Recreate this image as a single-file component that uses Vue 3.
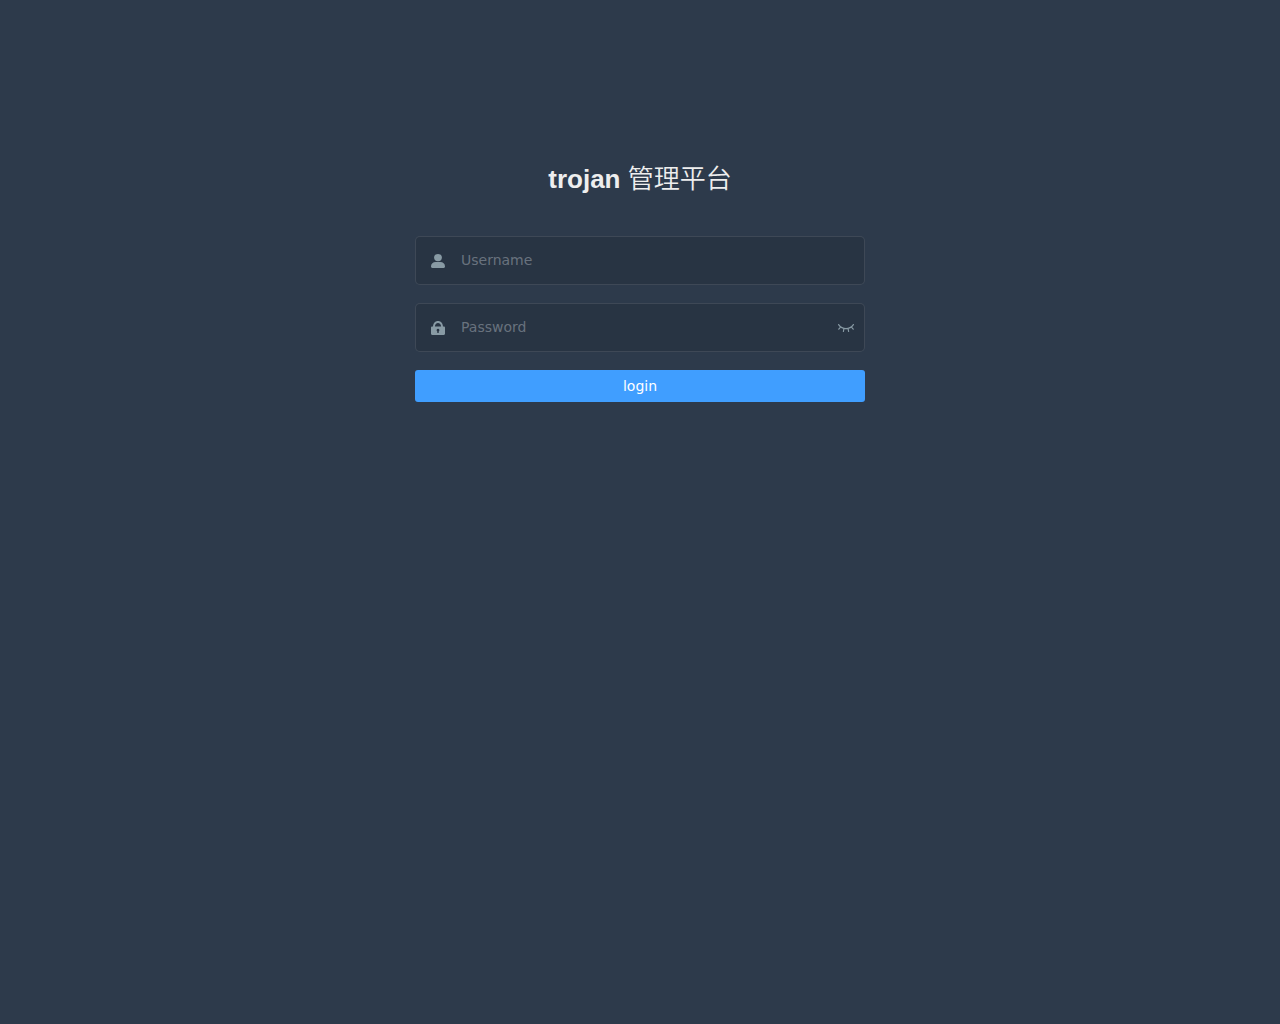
<template>
  <main class="login-container">
    <form class="login-form" autocomplete="off" @submit.prevent="handleLogin">
      <h3 class="title">trojan <span class="title-cn" lang="zh-CN">管理平台</span></h3>

      <div class="form-item">
        <label class="icon-box" for="username" aria-label="Username">
          <svg class="icon" viewBox="0 0 14 14" aria-hidden="true">
            <ellipse cx="7" cy="3.6" rx="3.9" ry="3.6" />
            <path d="M0 12.6C0 9.7 2.1 8.1 4.6 8.1h4.8c2.5 0 4.6 1.6 4.6 4.5 0 .8-.5 1.4-1.3 1.4H1.3C.5 14 0 13.4 0 12.6z" />
          </svg>
        </label>
        <input id="username" v-model="form.username" type="text" placeholder="Username" />
      </div>

      <div class="form-item">
        <label class="icon-box" for="password" aria-label="Password">
          <svg class="icon" viewBox="0 0 14 14" aria-hidden="true">
            <path
              fill-rule="evenodd"
              d="M2 5.4C2.2 2.2 4.2 0 7 0s4.8 2.2 5 5.4h.8c.7 0 1.2.5 1.2 1.2v6.200c0 .7-.5 1.200-1.200 1.200H1.200C.5 14 0 13.500 0 12.800V6.600c0-.7.5-1.200 1.200-1.200zM3.900 5.400h6.200C9.900 3.200 8.700 1.900 7 1.900S4.100 3.200 3.900 5.400zM7 7.800a1.400 1.400 0 0 0-.7 2.600v1.500h1.400v-1.500A1.400 1.400 0 0 0 7 7.800z"
            />
          </svg>
        </label>
        <input
          id="password"
          v-model="form.password"
          :type="showPwd ? 'text' : 'password'"
          placeholder="Password"
        />
        <button class="show-pwd" type="button" aria-label="Toggle password" @click="showPwd = !showPwd">
          <svg v-if="showPwd" class="eye" viewBox="0 0 16 8" aria-hidden="true">
            <path d="M.5 4C4.5-.5 11.5-.5 15.5 4 11.5 8.5 4.5 8.5.5 4z" />
            <circle cx="8" cy="4" r="2" />
          </svg>
          <svg v-else class="eye" viewBox="0 0 16 8" aria-hidden="true">
            <path d="M.6.6C4.5 6 11.5 6 15.4.6M2.700 2.900.8 5.200M5.900 4.500l-.5 3M10.100 4.500l.5 3M13.300 2.900l1.900 2.300" />
          </svg>
        </button>
      </div>

      <button class="login-button" type="submit">login</button>
    </form>
  </main>
</template>

<script setup>
import { reactive, ref } from 'vue';

const form = reactive({
  username: '',
  password: '',
});
const showPwd = ref(false);

const handleLogin = () => {
  if (!form.username || !form.password) {
    return;
  }
  console.log('login', form.username);
};
</script>

<style>
body {
  margin: 0;
  background-color: #2d3a4b;
}
</style>

<style scoped>
.login-container {
  box-sizing: border-box;
  min-height: 100vh;
  background-color: #2d3a4b;
  font-family: "Liberation Sans", "Noto Sans CJK SC", sans-serif;
}

.login-form {
  box-sizing: border-box;
  width: 100%;
  max-width: 520px;
  margin: 0 auto;
  padding: 160px 35px 0;
}

.title {
  margin: 0 0 38px;
  color: #eee;
  font-size: 26px;
  line-height: 38px;
  font-weight: bold;
  text-align: center;
}

.title-cn {
  font-weight: 350;
}

.form-item {
  display: flex;
  align-items: center;
  margin-bottom: 18px;
  border: 1px solid rgba(255, 255, 255, 0.1);
  border-radius: 5px;
  background-color: rgba(0, 0, 0, 0.1);
}

.icon-box {
  display: flex;
  padding-left: 15px;
}

.icon {
  width: 14px;
  height: 14px;
  fill: #889aa4;
}

input {
  box-sizing: border-box;
  flex: 1;
  min-width: 0;
  height: 47px;
  padding: 11px 5px 13px 16px;
  border: 0;
  outline: none;
  background: transparent;
  color: #fff;
  font-family: "DejaVu Sans", sans-serif;
  font-size: 14px;
}

input::placeholder {
  color: #68727e;
  opacity: 1;
}

.show-pwd {
  display: flex;
  padding: 4px 10px;
  border: 0;
  background: transparent;
  cursor: pointer;
}

.eye {
  width: 16px;
  height: 8px;
  fill: none;
  stroke: #889aa4;
  stroke-width: 1.2;
  stroke-linecap: round;
}

.login-button {
  display: block;
  width: 100%;
  height: 32px;
  padding: 0;
  border: 0;
  border-radius: 3px;
  background-color: #409eff;
  color: #fff;
  font-family: "DejaVu Sans", sans-serif;
  font-size: 14px;
  cursor: pointer;
}
</style>
